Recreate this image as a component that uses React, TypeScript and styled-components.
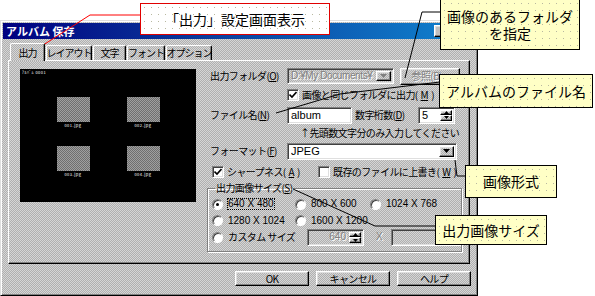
import React from 'react';
import styled, { createGlobalStyle, css } from 'styled-components';

/** global */
const GlobalStyle = createGlobalStyle`
	html, body { margin: 0; padding: 0; background: #fff; }
	body { font-family: "Noto Sans CJK JP", "Noto Sans", sans-serif; }
`;

/** shared looks */
const dither = css`
	background-color: #c4c4c4;
	background-image: repeating-conic-gradient(#b0b0b0 0% 25%, #d6d6d6 0% 50%);
	background-size: 2px 2px;
`;

const raised = css`
	border: 1px solid;
	border-color: #fff #000 #000 #fff;
	box-shadow: inset -1px -1px #808080, inset 1px 1px #dfdfdf;
`;

const sunken = css`
	border: 1px solid;
	border-color: #808080 #fff #fff #808080;
	box-shadow: inset 1px 1px #404040, inset -1px -1px #dfdfdf;
`;

const disabledText = css`
	color: #808080;
	text-shadow: 1px 1px 0 #fff;
`;

/** page */
const Page = styled.div`
	position: relative;
	width: 595px;
	height: 296px;
	overflow: hidden;
	background: #fff;
	padding-top: 20px;
	box-sizing: border-box;
`;

const Dialog = styled.div`
	${dither}
	width: 478px;
	height: 276px;
	box-sizing: border-box;
	border: 1px solid;
	border-color: #dfdfdf #000 #000 #dfdfdf;
	box-shadow: inset 1px 1px #fff, inset -1px -1px #808080;
	padding: 2px 3px 0 2px;
	display: flex;
	flex-direction: column;
	font-size: 10px;
	letter-spacing: -0.6px;
	line-height: 1;
	color: #000;
`;

const TitleBar = styled.div`
	height: 16px;
	display: flex;
	align-items: center;
	justify-content: space-between;
	background: linear-gradient(90deg, #000080 0%, #0b3f9e 45%, #1084d0 100%);
	padding: 0 2px 0 3px;
`;

const Title = styled.span`
	color: #fff;
	font-weight: bold;
	font-size: 11px;
	letter-spacing: 0;
`;

const TitleButtons = styled.div`
	display: flex;
	gap: 6px;
`;

const TitleButton = styled.span`
	${raised}
	background: #c0c0c0;
	width: 16px;
	height: 12px;
	box-sizing: border-box;
	display: flex;
	align-items: center;
	justify-content: center;
	font-size: 9px;
	font-weight: bold;
`;

const Body = styled.div`
	display: flex;
	flex-direction: column;
	padding: 0 4px 0 5px;
`;

const TabStrip = styled.div`
	display: flex;
	align-items: flex-end;
	gap: 1px;
	height: 17px;
	margin-top: 4px;
	padding-left: 2px;
	position: relative;
	z-index: 1;
`;

const Tab = styled.div<{ $w: number; $active?: boolean }>`
	width: ${p => p.$w}px;
	height: ${p => (p.$active ? 18 : 15)}px;
	box-sizing: border-box;
	${dither}
	border: 1px solid;
	border-color: #fff #000 transparent #fff;
	border-bottom: none;
	box-shadow: inset -1px 0 #808080;
	border-radius: 2px 2px 0 0;
	display: flex;
	align-items: center;
	justify-content: center;
	margin-bottom: ${p => (p.$active ? -1 : 0)}px;
	font-size: 10px;
	letter-spacing: -1px;
	white-space: nowrap;
`;

const Panel = styled.div`
	height: 204px;
	box-sizing: border-box;
	border: 1px solid;
	border-color: #fff #000 #000 #fff;
	box-shadow: inset -1px -1px #808080;
	display: flex;
	padding: 8px 0 0 11px;
`;

/** preview */
const Preview = styled.div`
	position: relative;
	width: 176px;
	height: 133px;
	background: #000;
	display: grid;
	grid-template-columns: 33px 33px;
	grid-auto-rows: 31px;
	column-gap: 37px;
	row-gap: 18px;
	justify-content: center;
	align-content: start;
	padding-top: 28px;
	box-sizing: border-box;
`;

const PreviewCaption = styled.span`
	position: absolute;
	left: 2px;
	top: 1px;
	color: #fff;
	font-size: 4px;
	letter-spacing: 0.5px;
`;

const Thumb = styled.div`
	display: flex;
	flex-direction: column;
	align-items: center;
`;

const ThumbImage = styled.div`
	width: 33px;
	height: 25px;
	background-color: #888;
	background-image: repeating-conic-gradient(#6f6f6f 0% 25%, #a0a0a0 0% 50%);
	background-size: 2px 2px;
`;

const ThumbName = styled.span`
	color: #fff;
	font-size: 4px;
	margin-top: 1px;
	letter-spacing: 0.5px;
`;

/** form */
const Form = styled.div`
	margin-left: 11px;
	margin-top: -2px;
	width: 262px;
	display: flex;
	flex-direction: column;
`;

const Row = styled.div<{ $h: number; $indent?: number }>`
	height: ${p => p.$h}px;
	display: flex;
	align-items: center;
	padding-left: ${p => p.$indent ?? 0}px;
	white-space: nowrap;
`;

const Label = styled.span<{ $w?: number }>`
	width: ${p => p.$w ?? 80}px;
	padding-left: 3px;
	box-sizing: border-box;
	flex: none;
`;

const Key = styled.u`
	text-underline-offset: 1px;
`;

const Field = styled.div<{ $w: number; $h?: number; $disabled?: boolean }>`
	${sunken}
	width: ${p => p.$w}px;
	height: ${p => p.$h ?? 17}px;
	box-sizing: border-box;
	background: ${p => (p.$disabled ? 'transparent' : '#fff')};
	display: flex;
	align-items: center;
	padding: 0 0 0 3px;
	font-family: "Liberation Sans", Arial, sans-serif;
	font-size: 11px;
	letter-spacing: 0;
	${p => p.$disabled && disabledText}
	flex: none;
	position: relative;
	overflow: hidden;
`;

const FieldText = styled.span`
	flex: 1;
	overflow: hidden;
	white-space: nowrap;
`;

const SmallFieldText = styled(FieldText)`
	font-size: 10px;
	letter-spacing: -0.4px;
`;

const FieldTextRight = styled(FieldText)`
	text-align: right;
	padding-right: 3px;
	font-size: 10px;
`;

const DropButton = styled.span`
	${raised}
	${dither}
	width: 15px;
	align-self: stretch;
	margin: 2px 2px 2px 0;
	box-sizing: border-box;
	display: flex;
	align-items: center;
	justify-content: center;
	flex: none;
`;

const Spin = styled.span`
	display: flex;
	flex-direction: column;
	width: 12px;
	align-self: stretch;
	margin: 2px 2px 2px 0;
	flex: none;
`;

const SpinPart = styled.span`
	${raised}
	${dither}
	flex: 1;
	display: flex;
	align-items: center;
	justify-content: center;
	box-sizing: border-box;
`;

const PushButton = styled.div<{ $w: number; $h?: number; $disabled?: boolean }>`
	${raised}
	${dither}
	width: ${p => p.$w}px;
	height: ${p => p.$h ?? 16}px;
	box-sizing: border-box;
	display: flex;
	align-items: center;
	justify-content: center;
	font-size: 10px;
	flex: none;
	${p => p.$disabled && disabledText}
`;

const Hint = styled.span`
	padding-left: 93px;
`;

const CheckItem = styled.span<{ $w?: number }>`
	display: inline-flex;
	align-items: center;
	gap: 3px;
	${p => p.$w && `width: ${p.$w}px;`}
`;

const CheckBox = styled.span`
	${sunken}
	width: 12px;
	height: 12px;
	box-sizing: border-box;
	background: #fff;
	display: flex;
	align-items: center;
	justify-content: center;
	flex: none;
`;

const RadioDot = styled.span<{ $checked?: boolean }>`
	width: 11px;
	height: 11px;
	border-radius: 50%;
	box-sizing: border-box;
	border: 1px solid;
	border-color: #808080 #fff #fff #808080;
	background: #fff;
	box-shadow: inset 1px 1px #404040;
	display: flex;
	align-items: center;
	justify-content: center;
	flex: none;
	&::after {
		content: '';
		width: 3px;
		height: 3px;
		border-radius: 50%;
		background: ${p => (p.$checked ? '#000' : 'transparent')};
	}
`;

const Group = styled.fieldset`
	margin: 0;
	width: 251px;
	height: 70px;
	box-sizing: border-box;
	border: 1px solid #808080;
	box-shadow: 1px 1px 0 #fff, inset 1px 1px 0 #fff;
	padding: 2px 0 0 4px;
	display: grid;
	grid-template-columns: 83px 75px auto;
	grid-auto-rows: 16.5px;
	align-items: center;
`;

const Legend = styled.legend`
	padding: 0 1px;
	margin-left: 3px;
	font-size: 10px;
	line-height: 12px;
`;

const RadioItem = styled.span<{ $w?: number }>`
	display: inline-flex;
	align-items: center;
	gap: 4px;
	font-size: 10px;
	${p => p.$w && `width: ${p.$w}px;`}
`;

const RadioText = styled.span<{ $focus?: boolean }>`
	padding: 1px 1px;
	outline: ${p => (p.$focus ? '1px dotted #000' : 'none')};
	outline-offset: -1px;
`;

const SizeText = styled(RadioText)`
	font-family: "Liberation Sans", Arial, sans-serif;
	letter-spacing: 0;
`;

const CustomRow = styled.div`
	grid-column: 1 / -1;
	display: flex;
	align-items: center;
`;

const Times = styled.span`
	${disabledText}
	margin: 0 9px 0 12px;
	font-family: "Liberation Sans", Arial, sans-serif;
`;

const ButtonRow = styled.div`
	display: flex;
	justify-content: flex-end;
	gap: 7px;
	margin-top: 7px;
	margin-right: -1px;
`;

/** annotations */
const Leaders = styled.svg`
	position: absolute;
	left: 0;
	top: 0;
	pointer-events: none;
`;

const Callout = styled.div<{ $x: number; $y: number; $w: number; $h: number; $red?: boolean }>`
	position: absolute;
	left: ${p => p.$x}px;
	top: ${p => p.$y}px;
	width: ${p => p.$w}px;
	height: ${p => p.$h}px;
	box-sizing: border-box;
	border: 1px solid ${p => (p.$red ? '#e00000' : '#000')};
	background-color: ${p => (p.$red ? '#fff' : '#ffffc6')};
	background-image: radial-gradient(#b8b8a0 0.6px, transparent 0.9px);
	background-size: 7px 7px;
	display: flex;
	flex-direction: column;
	align-items: center;
	justify-content: center;
	font-family: "Noto Sans CJK JP", sans-serif;
	font-size: 14px;
	line-height: 17px;
	color: #000;
	white-space: nowrap;
`;

/** small drawings */
const Arrow = ({ disabled }: { disabled?: boolean }) => (
	<svg width="7" height="4" viewBox="0 0 7 4">
		<path d="M0 0h7L3.5 4z" fill={disabled ? '#808080' : '#000'} />
	</svg>
);

const Tick = () => (
	<svg width="8" height="8" viewBox="0 0 8 8">
		<path d="M0.5 3.5l2.5 2.5 4.5-5" stroke="#000" strokeWidth="1.6" fill="none" />
	</svg>
);

const SpinArrows = () => (
	<Spin>
		<SpinPart>
			<svg width="5" height="3" viewBox="0 0 5 3"><path d="M2.5 0L5 3H0z" fill="#000" /></svg>
		</SpinPart>
		<SpinPart>
			<svg width="5" height="3" viewBox="0 0 5 3"><path d="M0 0h5L2.5 3z" fill="#000" /></svg>
		</SpinPart>
	</Spin>
);

const tabs = [
	{ title: '出力', w: 35, active: true },
	{ title: 'レイアウト', w: 46 },
	{ title: '文字', w: 33 },
	{ title: 'フォント', w: 38 },
	{ title: 'オプション', w: 46 },
];

const thumbs = ['001', '002', '003', '004'];

const sizes = ['640 X 480', '800 X 600', '1024 X 768', '1280 X 1024', '1600 X 1200'];

/** Component: アルバム保存ダイアログ */
const App: React.FC = () => {
	return (
		<Page>
			<GlobalStyle />
			<Dialog>
				<TitleBar>
					<Title>アルバム 保存</Title>
					<TitleButtons>
						<TitleButton>?</TitleButton>
						<TitleButton>×</TitleButton>
					</TitleButtons>
				</TitleBar>

				<Body>
					<TabStrip>
						{tabs.map(t => (
							<Tab key={t.title} $w={t.w} $active={t.active}>
								{t.title}
							</Tab>
						))}
					</TabStrip>

					<Panel>
						<Preview>
							<PreviewCaption>ｱﾙﾊﾞﾑ 0001</PreviewCaption>
							{thumbs.map(n => (
								<Thumb key={n}>
									<ThumbImage />
									<ThumbName>{n}.jpg</ThumbName>
								</Thumb>
							))}
						</Preview>

						<Form>
							<Row $h={18}>
								<Label>
									出力フォルダ(<Key>O</Key>)
								</Label>
								<Field $w={107} $h={16} $disabled>
									<SmallFieldText>D:¥My Documents¥</SmallFieldText>
									<DropButton>
										<Arrow disabled />
									</DropButton>
								</Field>
								<PushButton $w={60} $h={17} $disabled style={{ marginLeft: 6 }}>
									参照(B)...
								</PushButton>
							</Row>

							<Row $h={20} $indent={80}>
								<CheckItem>
									<CheckBox>
										<Tick />
									</CheckBox>
									画像と同じフォルダに出力(<Key>M</Key>)
								</CheckItem>
							</Row>

							<Row $h={20}>
								<Label>
									ファイル名(<Key>N</Key>)
								</Label>
								<Field $w={65}>
									<FieldText>album</FieldText>
								</Field>
								<Label $w={66}>
									数字桁数(<Key>D</Key>)
								</Label>
								<Field $w={37}>
									<FieldText>5</FieldText>
									<SpinArrows />
								</Field>
							</Row>

							<Row $h={16}>
								<Hint>↑先頭数文字分のみ入力してください</Hint>
							</Row>

							<Row $h={20}>
								<Label>
									フォーマット(<Key>F</Key>)
								</Label>
								<Field $w={170}>
									<FieldText>JPEG</FieldText>
									<DropButton>
										<Arrow />
									</DropButton>
								</Field>
							</Row>

							<Row $h={21} $indent={5}>
								<CheckItem $w={106}>
									<CheckBox>
										<Tick />
									</CheckBox>
									シャープネス(<Key>A</Key>)
								</CheckItem>
								<CheckItem>
									<CheckBox />
									既存のファイルに上書き(<Key>W</Key>)
								</CheckItem>
							</Row>

							<Group>
								<Legend>
									出力画像サイズ(<Key>S</Key>)
								</Legend>
								{sizes.map((s, i) => (
									<RadioItem key={s}>
										<RadioDot $checked={i === 0} />
										<SizeText $focus={i === 0}>{s}</SizeText>
									</RadioItem>
								))}
								<span />
								<CustomRow>
									<RadioItem $w={95}>
										<RadioDot />
										<RadioText>カスタム サイズ</RadioText>
									</RadioItem>
									<Field $w={57} $disabled>
										<FieldTextRight>640</FieldTextRight>
										<SpinArrows />
									</Field>
									<Times>X</Times>
									<Field $w={70} $disabled>
										<FieldTextRight>480</FieldTextRight>
									</Field>
								</CustomRow>
							</Group>
						</Form>
					</Panel>

					<ButtonRow>
						<PushButton $w={74} $h={15}>OK</PushButton>
						<PushButton $w={74} $h={15}>キャンセル</PushButton>
						<PushButton $w={74} $h={15}>ヘルプ</PushButton>
					</ButtonRow>
				</Body>
			</Dialog>

			<Leaders width="595" height="296" viewBox="0 0 595 296">
				<polyline points="140,15 90,15 37,49" stroke="#f00" strokeWidth="1" fill="none" />
				<polyline points="440,12 422,12 405,78" stroke="#000" strokeWidth="1" fill="none" />
				<polyline points="276,113 340,94 440,82" stroke="#000" strokeWidth="1" fill="none" />
				<polyline points="455,160 457,176 465,176" stroke="#000" strokeWidth="1" fill="none" />
				<polyline points="293,189 375,226 435,226" stroke="#000" strokeWidth="1" fill="none" />
			</Leaders>

			<Callout $x={140} $y={3} $w={190} $h={32} $red>
				「出力」設定画面表示
			</Callout>
			<Callout $x={440} $y={-1} $w={140} $h={51}>
				<span>画像のあるフォルダ</span>
				<span>を指定</span>
			</Callout>
			<Callout $x={439} $y={74} $w={154} $h={34}>
				アルバムのファイル名
			</Callout>
			<Callout $x={465} $y={165} $w={92} $h={33}>
				画像形式
			</Callout>
			<Callout $x={435} $y={215} $w={112} $h={30}>
				出力画像サイズ
			</Callout>
		</Page>
	);
};

export default App;
